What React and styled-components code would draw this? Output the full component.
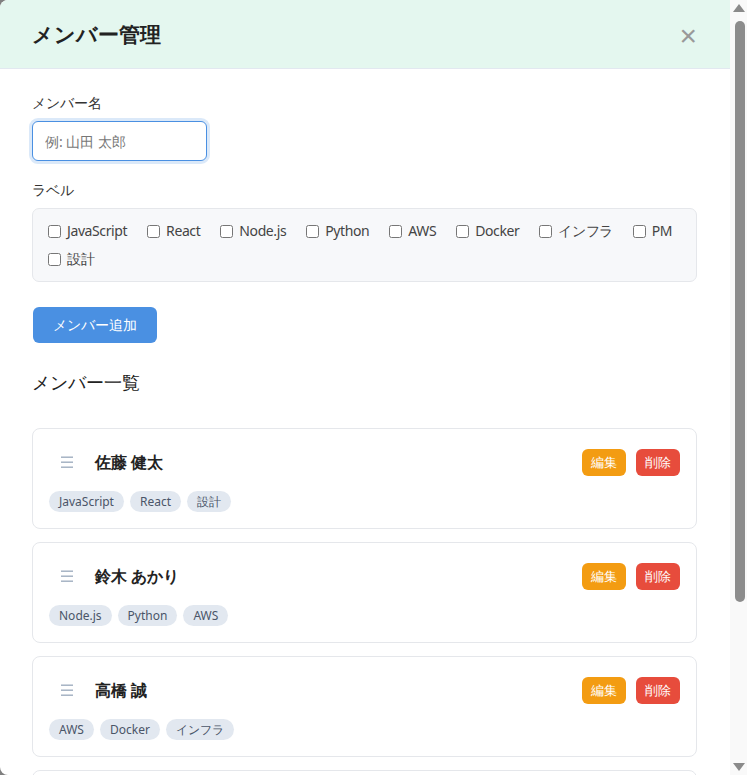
import React, { useState, useRef, useLayoutEffect, useCallback } from "react";
import styled, { createGlobalStyle } from "styled-components";

const GlobalStyle = createGlobalStyle`
  html, body {
    margin: 0;
    padding: 0;
    background: #808080;
  }
  body {
    font-family: system-ui, sans-serif;
    color: #333;
  }
  * { box-sizing: border-box; }
`;

const Modal = styled.div`
  display: flex;
  width: 747px;
  height: 775px;
  background: #fff;
  border-radius: 8px 0 0 8px;
  overflow: hidden;
`;

const ScrollArea = styled.div`
  flex: 1;
  min-width: 0;
  height: 100%;
  overflow-y: auto;
  scrollbar-width: none;
  &::-webkit-scrollbar { display: none; }
`;

const ScrollBar = styled.div`
  display: flex;
  flex-direction: column;
  width: 17px;
  flex-shrink: 0;
  background: #f9f9f9;
`;

const ScrollArrow = styled.div`
  height: 17px;
  display: flex;
  justify-content: center;
  align-items: ${(p) => (p.$down ? "flex-end" : "flex-start")};
  padding: ${(p) => (p.$down ? "0 0 4px 1px" : "4px 0 0 1px")};
`;

const ScrollTrack = styled.div`
  position: relative;
  flex: 1;
`;

const ScrollThumb = styled.div`
  position: absolute;
  left: 5px;
  width: 10px;
  border-radius: 5px;
  background: #8c8c8c;
`;

const Header = styled.div`
  display: flex;
  align-items: center;
  justify-content: space-between;
  height: 69px;
  padding: 0 33px 0 32px;
  background: #e4f7ef;
  border-bottom: 1px solid #e2e8f0;
`;

const Title = styled.h2`
  margin: 0;
  font-size: 21px;
  font-weight: 600;
  color: #222;
  line-height: 32px;
`;

const CloseButton = styled.button`
  border: none;
  background: none;
  padding: 0;
  margin-top: 4px;
  font-family: "Liberation Sans", sans-serif;
  font-size: 30px;
  line-height: 30px;
  color: #999;
  cursor: pointer;
`;

const Body = styled.div`
  padding: 24px 33px 106px 32px;
`;

const FieldLabel = styled.label`
  display: block;
  font-size: 14px;
  line-height: 20px;
  color: #333;
  margin-bottom: 8px;
`;

const Field = styled.div`
  margin-bottom: ${(p) => p.$mb}px;
`;

const TextInput = styled.input`
  width: 175px;
  height: 40px;
  padding: 0 12px;
  font-family: inherit;
  font-size: 14px;
  border: 1px solid #4a90e2;
  border-radius: 6px;
  outline: none;
  box-shadow: 0 0 0 3px rgba(74, 144, 226, 0.2);
  color: #333;
  &::placeholder { color: #777; }
`;

const CheckGroup = styled.div`
  display: flex;
  flex-wrap: wrap;
  gap: 8px 20px;
  padding: 12px 15px;
  background: #f7f8fa;
  border: 1px solid #e5e7eb;
  border-radius: 7px;
`;

const CheckItem = styled.label`
  display: inline-flex;
  align-items: center;
  gap: 6px;
  font-size: 14px;
  line-height: 20px;
  letter-spacing: -0.4px;
  color: #444;
  cursor: pointer;
  input { margin: 0; width: 13px; height: 13px; }
`;

const PrimaryButton = styled.button`
  height: 36px;
  padding: 0 20px;
  margin-left: 1px;
  border: none;
  border-radius: 6px;
  background: #4a90e2;
  color: #fff;
  font-family: inherit;
  font-size: 14px;
  cursor: pointer;
`;

const SectionTitle = styled.h3`
  margin: 26px 0 33px;
  font-size: 18px;
  font-weight: 500;
  line-height: 26px;
  color: #222;
`;

const List = styled.div`
  display: flex;
  flex-direction: column;
  gap: 13px;
`;

const Card = styled.div`
  border: 1px solid #e5e7eb;
  border-radius: 8px;
  padding: 16px;
  background: #fff;
`;

const CardTop = styled.div`
  display: flex;
  align-items: center;
  justify-content: space-between;
  min-height: 34px;
`;

const NameGroup = styled.div`
  display: flex;
  align-items: center;
  gap: 10px;
`;

const Handle = styled.span`
  display: inline-flex;
  align-items: center;
  padding: 0 12px;
  cursor: grab;
`;

const Name = styled.span`
  font-size: 16px;
  font-weight: 600;
  color: #222;
`;

const Actions = styled.div`
  display: flex;
  gap: 10px;
`;

const SmallButton = styled.button`
  height: 27px;
  padding: 0 9px;
  border: none;
  border-radius: 6px;
  background: ${(p) => p.$color};
  color: #fff;
  font-family: inherit;
  font-size: 13px;
  line-height: 27px;
  cursor: pointer;
`;

const Tags = styled.div`
  display: flex;
  flex-wrap: wrap;
  gap: 6px;
  margin-top: 12px;
`;

const Tag = styled.span`
  display: inline-block;
  padding: 2px 10px;
  border-radius: 11px;
  background: #e2e8f0;
  color: #4a5568;
  font-size: 12px;
  line-height: 17px;
`;

const HandleIcon = () => (
  <svg width="12" height="12" viewBox="0 0 12 12" aria-hidden="true">
    <rect x="0" y="0.5" width="12" height="1.4" fill="#a0aec0" />
    <rect x="0" y="5.5" width="12" height="1.4" fill="#a0aec0" />
    <rect x="0" y="10.5" width="12" height="1.4" fill="#a0aec0" />
  </svg>
);

const Triangle = ({ down }) => (
  <svg width="12" height="8" viewBox="0 0 12 8" aria-hidden="true">
    <polygon points={down ? "0,0 12,0 6,8" : "6,0 12,8 0,8"} fill="#8a8a8a" />
  </svg>
);

const LABELS = ["JavaScript", "React", "Node.js", "Python", "AWS", "Docker", "インフラ", "PM", "設計"];

const MEMBERS = [
  { name: "佐藤 健太", tags: ["JavaScript", "React", "設計"] },
  { name: "鈴木 あかり", tags: ["Node.js", "Python", "AWS"] },
  { name: "高橋 誠", tags: ["AWS", "Docker", "インフラ"] },
  { name: "田中 美咲", tags: ["PM", "設計"] },
];

const INSET = 4;

export default function App() {
  const [name, setName] = useState("");
  const areaRef = useRef(null);
  const trackRef = useRef(null);
  const [thumb, setThumb] = useState({ top: INSET, height: 583 });

  const update = useCallback(() => {
    const area = areaRef.current;
    const track = trackRef.current;
    if (!area || !track) return;
    const usable = track.clientHeight - INSET * 2;
    const ratio = area.clientHeight / area.scrollHeight;
    const height = Math.max(30, usable * ratio);
    const max = area.scrollHeight - area.clientHeight;
    const top = INSET + (max > 0 ? (area.scrollTop / max) * (usable - height) : 0);
    setThumb({ top, height });
  }, []);

  useLayoutEffect(() => {
    update();
  }, [update]);

  return (
    <>
      <GlobalStyle />
      <Modal>
        <ScrollArea ref={areaRef} onScroll={update}>
          <Header>
            <Title>メンバー管理</Title>
            <CloseButton aria-label="閉じる">×</CloseButton>
          </Header>
          <Body>
            <Field $mb={19}>
              <FieldLabel>メンバー名</FieldLabel>
              <TextInput
                value={name}
                onChange={(e) => setName(e.target.value)}
                placeholder="例: 山田 太郎"
              />
            </Field>
            <Field $mb={25}>
              <FieldLabel>ラベル</FieldLabel>
              <CheckGroup>
                {LABELS.map((l) => (
                  <CheckItem key={l}>
                    <input type="checkbox" />
                    {l}
                  </CheckItem>
                ))}
              </CheckGroup>
            </Field>
            <PrimaryButton>メンバー追加</PrimaryButton>
            <SectionTitle>メンバー一覧</SectionTitle>
            <List>
              {MEMBERS.map((m) => (
                <Card key={m.name}>
                  <CardTop>
                    <NameGroup>
                      <Handle>
                        <HandleIcon />
                      </Handle>
                      <Name>{m.name}</Name>
                    </NameGroup>
                    <Actions>
                      <SmallButton $color="#f39c12">編集</SmallButton>
                      <SmallButton $color="#e74c3c">削除</SmallButton>
                    </Actions>
                  </CardTop>
                  <Tags>
                    {m.tags.map((t) => (
                      <Tag key={t}>{t}</Tag>
                    ))}
                  </Tags>
                </Card>
              ))}
            </List>
          </Body>
        </ScrollArea>
        <ScrollBar aria-hidden="true">
          <ScrollArrow>
            <Triangle />
          </ScrollArrow>
          <ScrollTrack ref={trackRef}>
            <ScrollThumb style={{ top: thumb.top, height: thumb.height }} />
          </ScrollTrack>
          <ScrollArrow $down>
            <Triangle down />
          </ScrollArrow>
        </ScrollBar>
      </Modal>
    </>
  );
}
